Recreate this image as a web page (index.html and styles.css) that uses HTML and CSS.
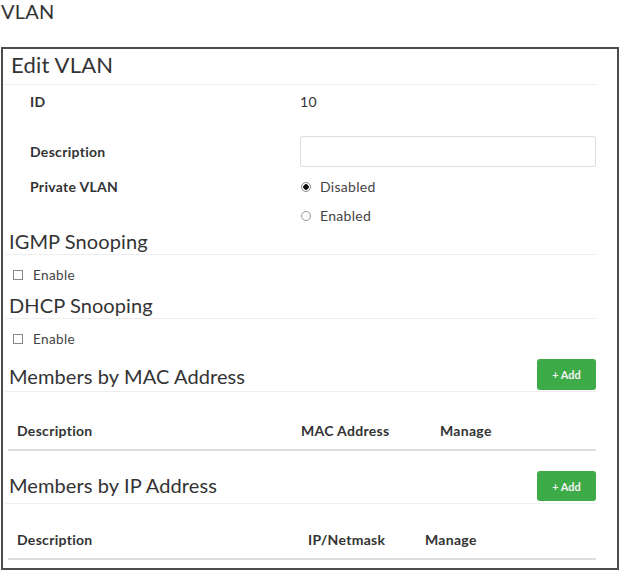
FILE: index.html
```html
<!DOCTYPE html>
<html lang="en">
<head>
    <meta charset="UTF-8">
    <title>VLAN</title>
    <link rel="stylesheet" href="styles.css">
</head>
<body>
    <div class="page-title">VLAN</div>

    <div class="panel">
        <div class="panel-heading">Edit VLAN</div>

        <div class="form-row row-id">
            <div class="form-label">ID</div>
            <div class="form-value">10</div>
        </div>

        <div class="form-row row-desc">
            <div class="form-label">Description</div>
            <div class="form-value"><input type="text" class="text-input"></div>
        </div>

        <div class="form-row row-private">
            <div class="form-label">Private VLAN</div>
            <div class="form-value">
                <label class="radio-line"><input type="radio" name="pvlan" checked> Disabled</label>
                <label class="radio-line"><input type="radio" name="pvlan"> Enabled</label>
            </div>
        </div>

        <div class="section-title">IGMP Snooping</div>
        <label class="check-line"><input type="checkbox"> Enable</label>

        <div class="section-title">DHCP Snooping</div>
        <label class="check-line"><input type="checkbox"> Enable</label>

        <div class="section-bar">
            <span class="section-bar-title">Members by MAC Address</span>
            <button class="add-btn">+ Add</button>
        </div>
        <table class="members-table mac-table">
            <thead>
                <tr>
                    <th class="col-desc">Description</th>
                    <th class="col-addr">MAC Address</th>
                    <th>Manage</th>
                </tr>
            </thead>
        </table>

        <div class="section-bar bar-ip">
            <span class="section-bar-title">Members by IP Address</span>
            <button class="add-btn">+ Add</button>
        </div>
        <table class="members-table ip-table">
            <thead>
                <tr>
                    <th class="col-desc">Description</th>
                    <th class="col-addr">IP/Netmask</th>
                    <th>Manage</th>
                </tr>
            </thead>
        </table>
    </div>
</body>
</html>
```

FILE: styles.css
```css
* {
    margin: 0;
    padding: 0;
    box-sizing: border-box;
}

body {
    font-family: Lato, "Open Sans", sans-serif;
    color: #333;
    background: #fff;
}

.page-title {
    height: 47px;
    padding: 1px 0 0 1px;
    font-size: 20px;
    line-height: 20px;
    letter-spacing: 0.2px;
    color: #333;
}

.panel {
    margin: 0 2px 0 1px;
    border: 2px solid #4d4d4d;
    padding: 0 21px 8px 0;
    background: #fff;
}

.panel-heading {
    height: 36px;
    line-height: 32px;
    padding-left: 8px;
    font-size: 22px;
    letter-spacing: 0.2px;
    color: #333;
    border-bottom: 1px solid #eee;
}

.form-row {
    display: grid;
    grid-template-columns: 270px 1fr;
    padding-left: 27px;
    font-size: 14px;
    letter-spacing: 0.3px;
}

.form-label {
    font-weight: 700;
    color: #333;
}

.form-value {
    color: #333;
}

.row-id {
    height: 32px;
    align-items: center;
}

.row-desc {
    padding-top: 19px;
    height: 55px;
    align-items: center;
    align-content: start;
}

.text-input {
    display: block;
    width: 296px;
    height: 31px;
    border: 1px solid #ddd;
    border-radius: 3px;
    outline: none;
}

.row-private {
    align-items: start;
}

.row-private .form-label {
    line-height: 29px;
}

.radio-line {
    display: flex;
    align-items: center;
    height: 29px;
    gap: 9px;
    color: #444;
}

.radio-line input {
    appearance: none;
    width: 10px;
    height: 10px;
    margin-left: 1px;
    border: 1px solid #999;
    border-radius: 50%;
    background: #fff;
}

.radio-line input:checked {
    background: radial-gradient(circle, #111 0 2.5px, #fff 3px);
    border-color: #888;
}

.section-title {
    height: 25px;
    line-height: 22px;
    margin-left: 2px;
    padding-left: 4px;
    font-size: 20px;
    letter-spacing: 0.1px;
    color: #333;
    border-bottom: 1px solid #eee;
}

.check-line {
    display: flex;
    align-items: center;
    gap: 10px;
    height: 39px;
    padding-left: 10px;
    font-size: 13.5px;
    letter-spacing: 0.4px;
    color: #444;
}

.check-line input {
    appearance: none;
    width: 10px;
    height: 10px;
    border: 1px solid #888;
    background: #fff;
}

.section-bar {
    display: flex;
    justify-content: space-between;
    align-items: flex-start;
    height: 34px;
    margin-left: 2px;
    padding-left: 4px;
    border-bottom: 1px solid #eee;
}

.section-bar-title {
    font-size: 20px;
    line-height: 24px;
    letter-spacing: 0.1px;
    padding-top: 6px;
}

.bar-ip {
    margin-top: 19px;
}

.bar-ip .section-bar-title {
    padding-top: 3px;
}

.add-btn {
    width: 59px;
    height: 31px;
    margin-top: 1px;
    border: none;
    border-radius: 3px;
    background: #3dac48;
    color: #f2f2f2;
    font-family: Lato, sans-serif;
    font-size: 11px;
    font-weight: 700;
}

.bar-ip .add-btn {
    height: 30px;
}

.members-table {
    width: 588px;
    margin-left: 5px;
    border-collapse: collapse;
    font-size: 14px;
    letter-spacing: 0.3px;
}

.members-table th {
    text-align: left;
    font-weight: 700;
    color: #333;
    padding: 8px 9px;
    line-height: 20px;
    border-bottom: 2px solid #ddd;
}

.mac-table {
    margin-top: 21px;
}

.mac-table .col-desc {
    width: 284px;
}

.mac-table .col-addr {
    width: 139px;
}

.ip-table {
    margin-top: 18px;
}

.ip-table .col-desc {
    width: 291px;
}

.ip-table .col-addr {
    width: 117px;
}
```
